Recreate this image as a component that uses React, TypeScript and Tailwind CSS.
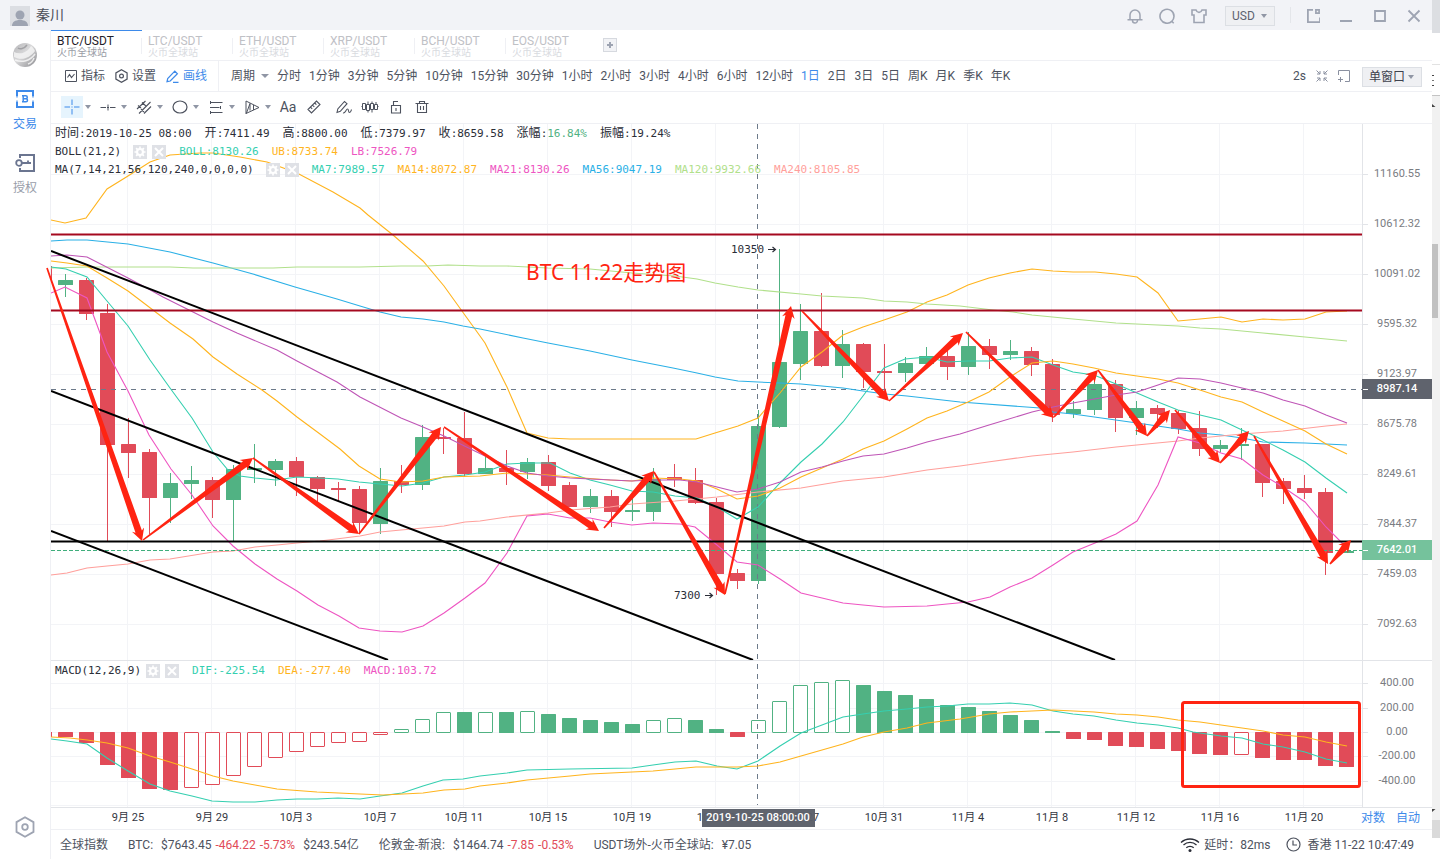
import React from "react";

const GREEN = "#51b283";
const RED = "#e14b58";

/* ------------------------------------------------------------------ */
/* Data                                                               */
/* ------------------------------------------------------------------ */

// [direction, high, body top, body bottom, low]
type Candle = ["g" | "r", number, number, number, number];
const candles: Candle[] = [
  ["g", 274, 280, 285, 297],
  ["r", 278, 280, 314, 320],
  ["r", 304, 313, 445, 542],
  ["r", 418, 444, 453, 478],
  ["r", 449, 452, 498, 534],
  ["g", 473, 483, 498, 523],
  ["g", 466, 480, 484, 499],
  ["r", 477, 480, 500, 518],
  ["g", 465, 469, 500, 541],
  ["g", 444, 468, 470, 483],
  ["g", 459, 461, 470, 486],
  ["r", 457, 461, 477, 496],
  ["r", 476, 477, 489, 502],
  ["r", 482, 488, 490, 502],
  ["r", 486, 489, 523, 534],
  ["g", 468, 481, 524, 534],
  ["r", 465, 481, 485, 493],
  ["g", 425, 437, 485, 490],
  ["r", 428, 437, 439, 454],
  ["r", 412, 438, 474, 477],
  ["g", 457, 468, 474, 474],
  ["r", 450, 468, 472, 485],
  ["g", 458, 462, 472, 479],
  ["r", 455, 462, 486, 491],
  ["r", 482, 485, 507, 507],
  ["g", 489, 496, 507, 513],
  ["r", 490, 496, 512, 527],
  ["g", 498, 510, 512, 521],
  ["g", 468, 479, 512, 521],
  ["r", 464, 477, 480, 487],
  ["r", 468, 480, 503, 504],
  ["r", 498, 502, 574, 595],
  ["r", 569, 573, 581, 589],
  ["g", 410, 426, 581, 584],
  ["g", 249, 362, 427, 428],
  ["g", 304, 331, 364, 380],
  ["r", 293, 331, 366, 367],
  ["g", 330, 344, 366, 378],
  ["r", 343, 344, 372, 388],
  ["r", 344, 371, 373, 395],
  ["g", 357, 363, 373, 382],
  ["g", 347, 356, 364, 364],
  ["r", 348, 356, 367, 380],
  ["g", 332, 346, 367, 375],
  ["r", 339, 346, 355, 369],
  ["g", 340, 351, 355, 360],
  ["r", 347, 351, 365, 376],
  ["r", 359, 364, 415, 422],
  ["g", 401, 409, 414, 418],
  ["g", 372, 384, 410, 415],
  ["r", 380, 384, 418, 432],
  ["g", 401, 408, 418, 435],
  ["r", 405, 408, 414, 428],
  ["r", 410, 413, 429, 434],
  ["r", 411, 428, 449, 456],
  ["g", 440, 445, 449, 452],
  ["g", 428, 444, 446, 460],
  ["r", 444, 444, 483, 497],
  ["r", 478, 481, 489, 504],
  ["r", 475, 488, 493, 499],
  ["r", 488, 492, 553, 575],
  ["g", 551, 551, 553, 553],
];

// [direction, bar end, hollow]
type Bar = ["g" | "r", number, 0 | 1];
const bars: Bar[] = [
  ["r", 737, 0], ["r", 743, 0], ["r", 765, 0], ["r", 778, 0], ["r", 789, 0], ["r", 790, 0],
  ["r", 788, 1], ["r", 785, 1], ["r", 776, 1], ["r", 767, 1], ["r", 758, 1], ["r", 752, 1],
  ["r", 747, 1], ["r", 743, 1], ["r", 742, 1], ["r", 735, 1], ["g", 729, 1], ["g", 719, 1],
  ["g", 712, 1], ["g", 712, 0], ["g", 712, 1], ["g", 712, 0], ["g", 711, 1], ["g", 714, 0],
  ["g", 718, 0], ["g", 720, 0], ["g", 722, 0], ["g", 724, 0], ["g", 720, 1], ["g", 718, 1],
  ["g", 720, 0], ["g", 729, 0], ["r", 737, 0], ["g", 720, 1], ["g", 701, 1], ["g", 685, 1],
  ["g", 682, 1], ["g", 680, 1], ["g", 685, 0], ["g", 691, 0], ["g", 695, 0], ["g", 699, 0],
  ["g", 705, 0], ["g", 707, 0], ["g", 711, 0], ["g", 715, 0], ["g", 720, 0], ["g", 731, 0],
  ["r", 739, 0], ["r", 740, 0], ["r", 746, 0], ["r", 747, 0], ["r", 749, 0], ["r", 751, 0],
  ["r", 754, 0], ["r", 755, 0], ["r", 755, 1], ["r", 758, 0], ["r", 760, 0], ["r", 760, 0],
  ["r", 766, 0], ["r", 767, 0],
];

const priceLines = [
  {
    color: "#ffb41e",
    points:
      "51,220 65,223 86,218 107,189 128,176 150,162 170,155 200,153 213,153 240,157 267,162 297,173 333,192 360,208 368,215 393,235 423,261 444,286 467,318 480,336 485,343 507,387 527,433 548,438 570,439 590,439 613,439 675,439 696,439 715,433 738,426 758,418 780,393 801,367 822,352 843,335 863,327 884,320 907,312 927,302 947,295 968,285 989,278 1010,273 1032,269 1053,271 1073,272 1095,272 1116,274 1137,277 1158,293 1178,321 1200,319 1221,317 1242,322 1263,319 1283,320 1305,319 1326,312 1347,311",
  },
  {
    color: "#2bb0e6",
    points:
      "51,241 67,240 87,240 128,244 170,252 213,263 253,274 295,287 337,299 360,306 380,312 401,317 423,319 444,322 463,326 480,329 523,338 548,343 590,351 632,360 673,368 697,373 715,377 738,381 758,382 780,383 801,384 822,386 843,388 863,391 885,394 907,396 960,402 1040,408 1053,412 1073,414 1137,423 1178,429 1200,433 1221,435 1242,438 1263,442 1305,443 1347,445",
  },
  {
    color: "#b1e08b",
    points:
      "51,268 87,267 128,267 170,267 193,268 273,268 297,267 360,267 401,266 427,266 448,265 480,266 507,266 548,268 590,269 632,273 675,276 697,279 715,283 738,287 758,290 801,294 822,296 863,298 884,301 907,302 927,304 960,306 993,310 1013,312 1032,315 1073,319 1116,323 1178,326 1200,328 1221,329 1263,333 1305,337 1347,341",
  },
  {
    color: "#ff9f9b",
    points:
      "51,575 67,573 87,568 107,566 128,564 150,560 170,559 213,552 233,551 255,547 277,545 297,543 320,541 360,536 380,532 401,530 423,528 444,526 465,522 480,521 507,517 548,513 570,510 610,507 632,504 675,501 717,497 758,492 801,488 843,481 884,477 927,470 960,466 988,462 1032,456 1073,452 1116,447 1178,441 1200,438 1242,434 1283,431 1326,426 1347,424",
  },
  {
    color: "#35cfb0",
    points:
      "51,267 66,269 87,277 107,301 128,326 150,360 170,388 192,418 213,452 228,470 240,476 255,478 276,480 297,477 320,478 338,479 359,482 380,484 402,486 423,483 444,477 465,475 485,472 507,464 527,463 550,463 570,473 590,480 610,485 632,491 653,492 675,496 697,498 717,507 737,519 758,507 780,483 801,462 822,444 843,422 863,396 884,368 905,359 927,357 947,362 968,361 989,361 1010,358 1032,357 1053,365 1073,372 1094,375 1116,384 1137,393 1158,402 1178,410 1200,415 1221,420 1242,430 1263,440 1283,450 1305,462 1326,478 1347,493",
  },
  {
    color: "#ffb41e",
    points:
      "51,261 67,263 87,266 107,278 128,291 170,323 193,339 213,357 237,374 262,390 277,401 297,417 320,434 340,449 359,466 380,479 401,482 423,481 444,477 480,476 507,473 548,475 570,477 610,480 632,481 653,478 680,479 697,481 717,489 737,499 758,496 780,488 801,477 822,468 843,459 863,449 884,441 907,429 927,418 947,411 968,402 989,392 1010,377 1032,363 1053,361 1073,364 1094,368 1116,373 1137,376 1158,379 1178,383 1200,390 1221,397 1242,402 1263,412 1283,421 1305,431 1326,444 1347,454",
  },
  {
    color: "#bf55b6",
    points:
      "51,256 67,255 87,257 128,278 143,286 163,297 213,322 237,333 277,350 297,361 337,382 360,397 401,418 423,427 444,436 485,456 507,466 527,473 548,476 570,478 632,481 653,480 680,480 697,482 717,487 737,492 758,489 780,482 801,472 822,467 843,461 863,456 884,454 907,448 927,442 960,434 989,425 1032,412 1053,407 1073,403 1116,395 1137,392 1158,385 1178,378 1200,379 1221,383 1242,388 1263,393 1283,400 1305,406 1326,415 1347,423",
  },
  {
    color: "#ee55c2",
    points:
      "51,293 65,287 87,298 107,352 128,391 149,435 171,469 192,495 213,526 233,546 255,564 277,579 297,591 318,605 339,616 359,628 380,631 402,632 423,626 444,613 465,598 485,583 507,553 527,516 548,514 570,518 590,518 610,522 632,525 653,523 680,524 695,527 717,545 737,562 758,565 780,579 801,593 822,598 843,603 863,605 884,607 927,606 947,604 968,602 990,597 1010,587 1032,578 1053,565 1073,552 1095,543 1116,534 1137,521 1158,485 1178,437 1200,443 1221,453 1242,459 1263,475 1283,487 1305,502 1326,527 1347,548",
  },
];

const difPoints =
  "51,739 67,741 87,744 107,758 128,771 150,784 170,791 192,796 212,801 233,802 255,802 277,800 297,799 317,799 338,798 360,799 380,796 402,793 423,786 443,780 463,779 480,776 507,773 527,770 570,769 632,768 653,765 675,762 696,761 717,766 737,769 758,761 780,746 801,733 822,725 843,717 863,714 884,711 907,709 927,707 947,706 968,704 989,704 1010,703 1032,705 1053,711 1073,714 1094,716 1116,720 1137,723 1158,725 1178,728 1193,732 1221,736 1242,738 1263,744 1283,747 1305,752 1326,759 1347,763";
const deaPoints =
  "51,737 70,738 87,740 107,743 128,748 150,756 170,762 192,769 213,776 233,781 255,785 277,789 317,792 360,794 383,795 423,793 444,790 465,789 480,786 507,783 527,780 570,776 590,774 632,772 653,771 675,769 696,767 737,767 758,766 780,762 801,756 822,750 843,744 863,737 884,732 907,728 927,723 960,719 989,714 1010,712 1053,710 1094,712 1116,714 1137,715 1158,717 1178,720 1200,722 1221,725 1242,728 1263,731 1283,735 1305,737 1326,742 1347,746";

// [tail x, tail y, tip x, tip y]
const arrows = [
  [47, 268, 142, 541],
  [143, 540, 253, 458],
  [253, 458, 359, 534],
  [359, 534, 441, 427],
  [444, 427, 599, 531],
  [604, 528, 654, 471],
  [654, 472, 725, 595],
  [725, 594, 791, 306],
  [802, 311, 889, 401],
  [889, 401, 963, 333],
  [966, 332, 1054, 418],
  [1054, 417, 1098, 370],
  [1098, 370, 1147, 436],
  [1147, 436, 1170, 410],
  [1175, 410, 1220, 463],
  [1220, 463, 1249, 431],
  [1254, 436, 1328, 564],
  [1330, 564, 1351, 540],
];

function arrowPoints([x1, y1, x2, y2]: number[]) {
  const len = Math.hypot(x2 - x1, y2 - y1);
  const ux = (x2 - x1) / len;
  const uy = (y2 - y1) / len;
  const at = (back: number, side: number) =>
    `${(x2 - ux * back - uy * side).toFixed(1)},${(y2 - uy * back + ux * side).toFixed(1)}`;
  return [at(len, 0.8), at(10, 3.4), at(12, 6.4), at(0, 0), at(12, -6.4), at(10, -3.4), at(len, -0.8)].join(" ");
}

const priceTicks = ["11160.55", "10612.32", "10091.02", "9595.32", "9123.97", "8675.78", "8249.61", "7844.37", "7459.03", "7092.63"];
const macdTicks: [string, number][] = [["400.00", 683], ["200.00", 708], ["0.00", 732], ["-200.00", 756], ["-400.00", 781]];
const dateTicks = ["9月 25", "9月 29", "10月 3", "10月 7", "10月 11", "10月 15", "10月 19", "10月 23", "10月 27", "10月 31", "11月 4", "11月 8", "11月 12", "11月 16", "11月 20"];
const markets = ["BTC/USDT", "LTC/USDT", "ETH/USDT", "XRP/USDT", "BCH/USDT", "EOS/USDT"];
const periods = ["分时", "1分钟", "3分钟", "5分钟", "10分钟", "15分钟", "30分钟", "1小时", "2小时", "3小时", "4小时", "6小时", "12小时", "1日", "2日", "3日", "5日", "周K", "月K", "季K", "年K"];

const gridX = (i: number) => 127.5 + 84 * i;
const barX = (i: number) => 58 + 21 * i;

/* ------------------------------------------------------------------ */
/* Small parts                                                        */
/* ------------------------------------------------------------------ */

type IconProps = { children: React.ReactNode; w?: number; h?: number; className?: string };
function Icon({ children, w = 16, h = 16, className = "" }: IconProps) {
  return (
    <svg width={w} height={h} viewBox={`0 0 ${w} ${h}`} fill="none" stroke="currentColor" className={`shrink-0 ${className}`} aria-hidden="true">
      {children}
    </svg>
  );
}

function Caret({ small = false }: { small?: boolean }) {
  return small ? (
    <svg width="6" height="4" viewBox="0 0 6 4" className="shrink-0" aria-hidden="true">
      <path d="M0 0h6L3 4z" fill="#9096a5" />
    </svg>
  ) : (
    <svg width="8" height="4" viewBox="0 0 8 4" className="shrink-0" aria-hidden="true">
      <path d="M0 0h8L4 4z" fill="#9096a5" />
    </svg>
  );
}

function BoxSelect({ label, options, className }: { label: string; options: string[]; className: string }) {
  return (
    <label className={`relative flex h-5 items-center border border-[#dcdfe4] bg-[#eff0f3] ${className}`}>
      <select aria-label={label} className="h-full w-full cursor-pointer appearance-none bg-transparent pl-1.5 outline-none">
        {options.map((o) => (
          <option key={o}>{o}</option>
        ))}
      </select>
      <span className="pointer-events-none absolute right-[7px] flex">
        <Caret small />
      </span>
    </label>
  );
}

function LegendButtons({ name }: { name: string }) {
  return (
    <span className="flex gap-[5px]">
      <button aria-label={`${name} 设置`} className="flex size-3.5 items-center justify-center bg-[#dfe1e6]">
        <svg width="12" height="12" viewBox="0 0 12 12" aria-hidden="true">
          <circle cx="6" cy="6" r="3" fill="none" stroke="#fff" strokeWidth="2" />
          <path d="M6 0.5v11M0.5 6h11M2.1 2.1l7.8 7.8M9.9 2.1l-7.8 7.8" stroke="#fff" strokeWidth="1.6" />
          <circle cx="6" cy="6" r="1.9" fill="#dfe1e6" />
        </svg>
      </button>
      <button aria-label={`${name} 关闭`} className="flex size-3.5 items-center justify-center bg-[#dfe1e6]">
        <svg width="10" height="10" viewBox="0 0 10 10" aria-hidden="true">
          <path d="M1 1l8 8M9 1L1 9" stroke="#fff" strokeWidth="2" />
        </svg>
      </button>
    </span>
  );
}

function Quote({ label, value, tone = "text-[#2b2e38]" }: { label: string; value: string; tone?: string }) {
  return (
    <span>
      <span className="text-xs">{label}</span>:<span className={tone}>{value}</span>
    </span>
  );
}

/* ------------------------------------------------------------------ */
/* Chart panels                                                       */
/* ------------------------------------------------------------------ */

function PricePanel() {
  return (
    <svg viewBox="51 124 1381 537" className="block h-auto w-full overflow-visible" role="img" aria-label="BTC/USDT 日K线">
      <defs>
        <clipPath id="plot">
          <rect x="51" y="124" width="1311" height="536" />
        </clipPath>
      </defs>
      <g stroke="#f3f4f7">
        {dateTicks.map((d, i) => (
          <line key={d} x1={gridX(i)} x2={gridX(i)} y1="124" y2="661" />
        ))}
        {priceTicks.map((p, i) => (
          <line key={p} x1="51" x2="1362" y1={174.5 + 50 * i} y2={174.5 + 50 * i} />
        ))}
      </g>
      <g stroke="#e2e4e8">
        <line x1="1362.5" x2="1362.5" y1="124" y2="661" />
        {priceTicks.map((p, i) => (
          <line key={p} x1="1363" x2="1368" y1={174.5 + 50 * i} y2={174.5 + 50 * i} />
        ))}
        <line x1="51" x2="1432" y1="660.5" y2="660.5" />
      </g>
      <g clipPath="url(#plot)">
        <rect x="51" y="266" width="1" height="16" fill={RED} />
        {candles.map(([dir, high, top, bottom, low], i) => (
          <g key={i} fill={dir === "g" ? GREEN : RED}>
            <rect x={barX(i) + 7} y={high} width="1" height={low - high} />
            <rect x={barX(i)} y={top} width="15" height={bottom - top} rx="0.5" />
          </g>
        ))}
        <line x1="757.5" x2="757.5" y1="124" y2="661" stroke="#6d7a8a" strokeDasharray="5 5" />
        <line x1="51" x2="1362" y1="389.5" y2="389.5" stroke="#6d7a8a" strokeDasharray="5 5" />
        <g fill="none">
          {priceLines.map((l, i) => (
            <polyline key={i} points={l.points} stroke={l.color} strokeWidth="1.1" />
          ))}
        </g>
        <line x1="51" x2="1362" y1="550.5" y2="550.5" stroke="#3fae7c" strokeDasharray="4 2" />
        <g stroke="#a5091f" strokeWidth="2">
          <line x1="51" x2="1362" y1="234.5" y2="234.5" />
          <line x1="51" x2="1362" y1="310.5" y2="310.5" />
        </g>
        <g stroke="#000" strokeWidth="2">
          <line x1="51" x2="1362" y1="541.5" y2="541.5" />
          <line x1="51" x2="1115" y1="251" y2="660" />
          <line x1="51" x2="753" y1="391" y2="660" />
          <line x1="51" x2="388" y1="531" y2="660" />
        </g>
      </g>
      <g fill="#2b2e38" fontSize="11" className="font-['DejaVu_Sans_Mono',monospace]">
        <text x="731" y="253">10350</text>
        <text x="674" y="599">7300</text>
      </g>
      <g stroke="#2b2e38" fill="none" strokeWidth="1.2">
        <path d="M768 249.500h7M772.500 247l3 2.500-3 2.500" />
        <path d="M705 595.500h7M709.500 593l3 2.500-3 2.500" />
      </g>
      <g fill="#ff2412">
        {arrows.map((a, i) => (
          <polygon key={i} points={arrowPoints(a)} />
        ))}
        <text x="526" y="280" fontSize="21" className="font-['Noto_Sans','Noto_Sans_CJK_SC',sans-serif]">
          BTC 11.22走势图
        </text>
      </g>
      <g fontSize="11" fill="#7a7c82" textAnchor="middle">
        {priceTicks.map((p, i) => (
          <text key={p} x="1397" y={177 + 50 * i}>
            {p}
          </text>
        ))}
      </g>
      <g fontSize="11" fill="#fff" textAnchor="middle" className="font-medium">
        <rect x="1362" y="379" width="70" height="20" fill="#5f636d" />
        <text x="1397" y="392">8987.14</text>
        <rect x="1362" y="540" width="70" height="20" fill="#75c29c" />
        <text x="1397" y="553">7642.01</text>
      </g>
      <path d="M1363 389.500h5M1363 550.500h5" stroke="#fff" />
    </svg>
  );
}

function MacdPanel() {
  return (
    <svg viewBox="51 661 1381 168" className="block h-auto w-full" role="img" aria-label="MACD">
      <g stroke="#f3f4f7">
        {dateTicks.map((d, i) => (
          <line key={d} x1={gridX(i)} x2={gridX(i)} y1="661" y2="807" />
        ))}
        {macdTicks.map(([t, y]) => (
          <line key={t} x1="51" x2="1362" y1={y + 0.5} y2={y + 0.5} />
        ))}
        <line x1="51" x2="1362" y1="805.5" y2="805.5" />
      </g>
      <g stroke="#e2e4e8">
        <line x1="1362.5" x2="1362.5" y1="661" y2="807" />
        {macdTicks.map(([t, y]) => (
          <line key={t} x1="1363" x2="1368" y1={y + 0.5} y2={y + 0.5} />
        ))}
        <line x1="51" x2="1432" y1="807.5" y2="807.5" />
      </g>
      <rect x="51" y="732" width="1" height="5" fill={RED} />
      {bars.map(([dir, end, hollow], i) => {
        const color = dir === "g" ? GREEN : RED;
        const top = dir === "g" ? end : 732;
        const bottom = dir === "g" ? 733 : end;
        return hollow ? (
          <rect key={i} x={barX(i) + 0.5} y={top + 0.5} width="14" height={bottom - top - 1} fill="#fff" stroke={color} rx="0.5" />
        ) : (
          <rect key={i} x={barX(i)} y={top} width="15" height={bottom - top} fill={color} rx="0.5" />
        );
      })}
      <line x1="757.5" x2="757.5" y1="664" y2="805" stroke="#6d7a8a" strokeDasharray="5 5" />
      <g fill="none" strokeWidth="1.1">
        <polyline points={difPoints} stroke="#35cfb0" />
        <polyline points={deaPoints} stroke="#ffb41e" />
      </g>
      <rect x="1182.500" y="702.500" width="177" height="84" rx="2" fill="none" stroke="#ff2412" strokeWidth="3" />
      <g fontSize="11" fill="#7a7c82" textAnchor="middle">
        {macdTicks.map(([t, y]) => (
          <text key={t} x="1397" y={y + 3}>
            {t}
          </text>
        ))}
      </g>
      <g fontSize="11" fill="#33363f" textAnchor="middle">
        {dateTicks.map((d, i) => (
          <text key={d} x={128 + 84 * i} y="821">
            {d}
          </text>
        ))}
      </g>
      <rect x="702" y="809" width="113" height="18" fill="#5b5f69" fillOpacity="0.97" />
      <text x="758" y="821" fontSize="11" fill="#fff" textAnchor="middle" className="font-medium">
        2019-10-25 08:00:00
      </text>
    </svg>
  );
}

/* ------------------------------------------------------------------ */
/* Page regions                                                       */
/* ------------------------------------------------------------------ */

function TitleBar() {
  return (
    <header className="flex h-[30px] items-center bg-[#f2f3f7] pr-2.5 pl-2.5 text-[#9ea4b2]">
      <svg width="20" height="20" viewBox="0 0 20 20" className="mt-0.5" aria-hidden="true">
        <rect width="20" height="20" fill="#dcdee3" />
        <circle cx="10" cy="9" r="4.500" fill="#9ea4b2" />
        <path d="M2 20c0-4 3-6 8-6s8 2 8 6z" fill="#9ea4b2" />
      </svg>
      <span className="ml-1.5 text-sm leading-5 text-[#4a4e59]">秦川</span>
      <div className="ml-auto flex items-center gap-4 pt-0.5">
        <button aria-label="通知">
          <Icon>
            <path d="M3 11.500V7a5 5 0 0 1 10 0v4.500M0.500 11.800h15M5.500 12.500a2.500 2.500 0 0 0 5 0" strokeWidth="1.500" />
          </Icon>
        </button>
        <button aria-label="消息">
          <Icon>
            <path d="M12.800 13.300A7 7 0 1 1 15 8.200c0 2-.8 3.800-2.200 5.100M12.300 12.800l2.400 2.400" strokeWidth="1.600" />
          </Icon>
        </button>
        <button aria-label="皮肤">
          <Icon>
            <path d="M1 2h4c.6 1.600 1.700 2.400 3 2.400S10.400 3.600 11 2h4v5h-2v7.500H3V7H1z" strokeWidth="1.600" />
          </Icon>
        </button>
        <BoxSelect label="货币" options={["USD", "CNY"]} className="ml-0.5 w-[50px] text-xs text-[#5c6270]" />
      </div>
      <div className="ml-[15px] flex h-4 items-center gap-[18px] border-l border-[#e4e6ea] pt-0.5 pl-[13px]">
        <button aria-label="弹出">
          <Icon>
            <path d="M9 1.900H3.900v12.200H16V9.500" strokeWidth="1.800" />
            <path d="M11.900 1.900h3.200v3.200h-3.200z" strokeWidth="1.700" />
          </Icon>
        </button>
        <button aria-label="最小化">
          <Icon>
            <path d="M2 13h12" strokeWidth="2" />
          </Icon>
        </button>
        <button aria-label="最大化">
          <Icon>
            <path d="M3 3h10v10H3z" strokeWidth="1.800" />
          </Icon>
        </button>
        <button aria-label="关闭">
          <Icon>
            <path d="M2.500 2.500l11 11M13.500 2.500l-11 11" strokeWidth="1.800" />
          </Icon>
        </button>
      </div>
    </header>
  );
}

function Sidebar() {
  return (
    <nav className="flex w-[51px] shrink-0 flex-col items-center border-r border-[#eff0f4] pt-3 text-xs leading-4">
      <svg width="26" height="26" viewBox="0 0 26 26" aria-hidden="true">
        <defs>
          <linearGradient id="ball" x1="0" y1="0" x2="1" y2="1">
            <stop offset="0" stopColor="#b5b5b8" />
            <stop offset="0.45" stopColor="#d9d9da" />
            <stop offset="1" stopColor="#8c8c90" />
          </linearGradient>
        </defs>
        <circle cx="13" cy="13" r="12" fill="url(#ball)" />
        <path d="M2 10c6 3 13 1 17-6 2 1 3 3 4 5-5 7-13 10-21 6z" fill="#f3f3f3" opacity="0.85" />
        <path d="M6 6c2 1.500 6 1 9-3" stroke="#8f8f93" strokeWidth="1.500" fill="none" opacity="0.7" />
        <path d="M3 18c7 3 15 1 20-6M16 22c3-1 5-3 6-6" stroke="#fafafa" strokeWidth="1.500" fill="none" opacity="0.8" />
      </svg>
      <a href="#trade" className="mt-[22px] flex flex-col items-center gap-2 text-[#3d8aea]">
        <Icon w={18} h={18}>
          <path d="M1 6V1h16v5M1 12v5h16v-5" strokeWidth="2" />
          <path d="M1 6v1.500M17 6v1.500M1 10.500V12M17 10.500V12" strokeWidth="2" opacity="0.6" />
          <path d="M7.200 5.800v6M6 5.800h3.800a1.500 1.500 0 0 1 0 3H7.500M7.500 8.800H10a1.500 1.500 0 0 1 0 3H6" strokeWidth="1.500" />
        </Icon>
        <span>交易</span>
      </a>
      <a href="#auth" className="mt-[22px] flex flex-col items-center gap-2 text-[#989da9]">
        <Icon w={20} h={18} className="text-[#6b7590]">
          <path d="M5 4V1h14v16H5v-3" strokeWidth="2" />
          <circle cx="4" cy="9" r="2.800" strokeWidth="1.800" />
          <path d="M7 9h9M13 9V6.500" strokeWidth="1.800" />
        </Icon>
        <span>授权</span>
      </a>
      <button aria-label="系统设置" className="mt-auto mb-[21px] text-[#9ea4b2]">
        <Icon w={20} h={22}>
          <path d="M10 1.200l8.500 4.900v9.800L10 20.800l-8.500-4.900V6.100z" strokeWidth="1.800" />
          <circle cx="10" cy="11" r="2.800" strokeWidth="1.800" />
        </Icon>
      </button>
    </nav>
  );
}

function MarketTabs() {
  return (
    <div role="tablist" className="flex h-[31px] items-center border-b border-[#eff0f4]">
      {markets.map((m, i) => (
        <button
          key={m}
          role="tab"
          aria-selected={i === 0}
          className={`flex h-full w-[91px] items-center border-t text-left ${i === 0 ? "border-[#3d8aea]" : "border-transparent"}`}
        >
          <span className={`flex h-4 flex-1 flex-col justify-center border-r pt-0.5 pl-1.5 ${i < 5 ? "border-[#eff0f4]" : "border-transparent"}`}>
            <span className={`text-xs leading-[11px] ${i === 0 ? "text-[#1f2029]" : "text-[#bfc1c6]"}`}>{m}</span>
            <span className={`text-[10px] leading-[11px] ${i === 0 ? "text-[#9a9da6]" : "text-[#d9dbdf]"}`}>火币全球站</span>
          </span>
        </button>
      ))}
      <button aria-label="添加" className="ml-1.5 flex size-3.5 items-center justify-center border border-[#d6d9df] bg-[#f2f3f6] text-[#9ea4b2]">
        <Icon w={6} h={6}>
          <path d="M3 0v6M0 3h6" strokeWidth="2" />
        </Icon>
      </button>
    </div>
  );
}

function PeriodBar() {
  return (
    <div className="flex h-[31px] items-center border-b border-[#eff0f4] whitespace-nowrap">
      <div className="flex h-full items-center gap-2.5 border-r border-[#eff0f4] pr-[11px] pl-3.5">
        <button className="flex items-center gap-1">
          <Icon w={12} h={12}>
            <path d="M0.500 0.500h11v11H0.500z" />
            <path d="M2.500 7.500l2-3 2 3 3-3.500" strokeWidth="1.100" />
          </Icon>
          指标
        </button>
        <button className="flex items-center gap-1">
          <Icon w={13} h={14}>
            <path d="M6.500 0.700l5.600 3.200v6.200l-5.600 3.200L0.900 10.100V3.900z" strokeWidth="1.200" />
            <circle cx="6.500" cy="7" r="1.900" strokeWidth="1.200" />
          </Icon>
          设置
        </button>
        <button className="flex items-center gap-1 text-[#3d8aea]">
          <Icon w={13} h={13}>
            <path d="M1 11.700l.7-3.200L8.800 1.200l2.600 2.500-7.200 7.300zM7 12.300h5.500" strokeWidth="1.200" />
          </Icon>
          画线
        </button>
      </div>
      <label className="relative ml-3 flex items-center">
        <select aria-label="周期" className="w-[38px] cursor-pointer appearance-none bg-transparent outline-none">
          <option>周期</option>
        </select>
        <span className="pointer-events-none absolute right-0 flex">
          <Caret />
        </span>
      </label>
      <div className="ml-2 flex gap-2">
        {periods.map((p) => (
          <button key={p} className={p === "1日" ? "text-[#3d8aea]" : ""}>
            {p}
          </button>
        ))}
      </div>
      <div className="ml-auto flex items-center gap-2.5 pr-2.5 text-[#8a90a0]">
        <span className="text-[#4d525e]">2s</span>
        <button aria-label="缩小">
          <Icon w={12} h={12}>
            <path d="M0.500 0.500L4 4M1 4h3V1M11.500 0.500L8 4M11 4H8V1M0.500 11.500L4 8M1 8h3v3M11.500 11.500L8 8M11 8H8v3" />
          </Icon>
        </button>
        <button aria-label="新窗口">
          <Icon w={12} h={12}>
            <path d="M0.500 5V0.500h11v11H7M0 9.500h5M2.500 7v5" />
          </Icon>
        </button>
        <BoxSelect label="窗口" options={["单窗口", "双窗口"]} className="mt-0.5 ml-0.5 w-[60px] text-[#3e424d]" />
      </div>
    </div>
  );
}

const drawTools: { name: string; icon: React.ReactNode }[] = [
  { name: "十字光标", icon: <path d="M8 0.500v5.500M8 10v5.500M0.500 8H6M10 8h5.500M7.500 8h1" /> },
  { name: "水平线", icon: <path d="M0.500 8.500h5.500M10 8.500h5.500M7 8.500h2M8 5.500v6" /> },
  {
    name: "平行线",
    icon: <path d="M1 10L9.500 2M3 14.500L14.500 3M8 14.500L15 7.500M2 6.500l3 2.500M6 3.500l4.500 4M5 10l3 3" strokeWidth="1.100" />,
  },
  { name: "椭圆", icon: <ellipse cx="8" cy="8" rx="7" ry="6" strokeWidth="1.200" /> },
  { name: "斐波那契", icon: <path d="M2 3.500h12.500M2 8.500h9.500M2 13.500h12.500M2.500 2v3M12.500 7v3M2.500 12v3" /> },
  { name: "江恩", icon: <path d="M2 2v13M2 2l13 6.500M2 14.500l13-6M2.500 14L6 4.500v7M9.500 6v5" /> },
];

function DrawBar() {
  return (
    <div className="flex h-8 items-center border-b border-[#eff0f4] pb-px pl-2.5">
      {drawTools.map((t, i) => (
        <div key={t.name} className="flex w-9 items-center gap-0.5">
          <button
            aria-label={t.name}
            className={`flex size-[22px] items-center justify-center ${i === 0 ? "bg-[#e6f4fd] text-[#3d8aea]" : ""}`}
          >
            <Icon>{t.icon}</Icon>
          </button>
          <Caret small />
        </div>
      ))}
      <div className="flex items-center gap-1">
        <button className="w-[22px] text-center text-sm leading-5">Aa</button>
        <button aria-label="测量" className="flex size-[22px] items-center justify-center">
          <Icon>
            <path d="M2 10.500L10.500 2l3.500 3.500-8.500 8.500zM4.500 8.200l1.700 1.700M6.600 6.100l1.700 1.700M8.700 4l1.700 1.700" strokeWidth="1.100" />
          </Icon>
        </button>
      </div>
      <div className="ml-2 flex items-center gap-1">
        <button aria-label="画笔" className="flex size-[22px] items-center justify-center">
          <Icon w={18}>
            <path d="M2 13.500l.8-3.500 6.700-7.500 2.500 2.200-6.700 7.600zM8 14c2.500.5 3-4 4.500-4s.5 3.500 2 3.500 1.500-1.500 2-3" strokeWidth="1.100" />
          </Icon>
        </button>
        <button aria-label="K线" className="flex size-[22px] items-center justify-center">
          <Icon w={18}>
            <path d="M0.500 7.500h1M16 7.500h1.500" />
            <path d="M1.500 4.500h3v6h-3zM5.500 5.500h3v6h-3zM9.500 4.500h3v6h-3zM13.500 5.500h3v5h-3zM7 2.500v3M7 11.500v2M11 2.500v2M11 10.500v3M15 3v2.500" />
          </Icon>
        </button>
        <button aria-label="锁定" className="flex size-[22px] items-center justify-center">
          <Icon>
            <path d="M3.500 6.500h9v7.500h-9zM5.500 6.500V2.500h4.500M8 9v3" strokeWidth="1.100" />
          </Icon>
        </button>
        <button aria-label="删除" className="flex size-[22px] items-center justify-center">
          <Icon>
            <path d="M1.500 4.500h13M3.500 4.500V13.500h9V4.500M5.500 4.500V2.500h5v2M6.500 7v4M9.500 7v4" strokeWidth="1.100" />
          </Icon>
        </button>
      </div>
    </div>
  );
}

const legendClass =
  "absolute top-px left-1 flex flex-col font-['DejaVu_Sans_Mono','Noto_Sans_CJK_SC',monospace] text-[11px] leading-[18px] whitespace-nowrap text-[#2b2e38]";

function StatusBar() {
  return (
    <footer className="flex h-[30px] items-center border-t border-[#eff0f4] pr-[18px] pl-[9px] whitespace-nowrap">
      <span>全球指数</span>
      <span className="ml-5">BTC:</span>
      <span className="ml-2">$7643.45</span>
      <span className="ml-1 text-[#e14b58]">-464.22</span>
      <span className="ml-1 text-[#e14b58]">-5.73%</span>
      <span className="ml-2">$243.54亿</span>
      <span className="ml-5">伦敦金-新浪:</span>
      <span className="ml-2">$1464.74</span>
      <span className="ml-1 text-[#e14b58]">-7.85</span>
      <span className="ml-1 text-[#e14b58]">-0.53%</span>
      <span className="ml-5">USDT场外-火币全球站:</span>
      <span className="ml-2">¥7.05</span>
      <span className="ml-auto flex items-center gap-1">
        <Icon w={20} h={16} className="text-[#2b2e38]">
          <path d="M1 5.500C6 0.800 14 0.800 19 5.500M3.500 8c3.700-3.500 9.300-3.500 13 0M6.300 10.800c2-2 5.400-2 7.400 0" strokeWidth="1.300" />
          <circle cx="10" cy="13.500" r="1.500" fill="currentColor" stroke="none" />
        </Icon>
        延时：82ms
      </span>
      <span className="ml-4 flex items-center gap-1.5">
        <Icon w={15} h={15}>
          <circle cx="7.500" cy="7.500" r="6.500" strokeWidth="1.200" />
          <path d="M7 3.500V8h4" strokeWidth="1.200" />
        </Icon>
        香港 11-22 10:47:49
      </span>
    </footer>
  );
}

function EdgeStrip() {
  return (
    <div className="flex w-2 shrink-0 flex-col bg-white" aria-hidden="true">
      <div className="h-[33px] bg-[#dcdee2]" />
      <div className="h-8 border-b border-[#e2e2e2]" />
      <div className="h-[31px] border-b border-[#c4c4c4] pt-2.5">
        <div className="h-px w-0.5 bg-[#444]" />
        <div className="mt-1 h-px w-0.5 bg-[#777]" />
        <div className="mt-1 h-px w-0.5 bg-[#444]" />
      </div>
      <div className="flex flex-1 flex-col bg-[#f1f1f1] pt-2">
        <svg width="4" height="3" viewBox="0 0 4 3">
          <path d="M0 0l3.500 3H0z" fill="#444" />
        </svg>
        <div className="mt-[137px] h-[74px] w-1.5 bg-[#c1c1c1]" />
        <svg width="4" height="3" viewBox="0 0 4 3" className="mt-auto mb-2">
          <path d="M0 3V0h3.500z" fill="#444" />
        </svg>
      </div>
      <div className="h-[18px] bg-[#dadada]" />
      <div className="h-[21px]" />
    </div>
  );
}

export default function App() {
  return (
    <div className="flex min-h-screen bg-white font-['Roboto','Noto_Sans_CJK_SC',sans-serif] text-xs text-[#4d525e]">
      <div className="flex min-w-0 flex-1 flex-col">
        <TitleBar />
        <div className="flex flex-1">
          <Sidebar />
          <div className="flex min-w-0 flex-1 flex-col">
            <MarketTabs />
            <PeriodBar />
            <DrawBar />
            <main>
              <section className="relative">
                <PricePanel />
                <div className={legendClass}>
                  <div className="flex gap-[13px]">
                    <Quote label="时间" value="2019-10-25 08:00" />
                    <Quote label="开" value="7411.49" />
                    <Quote label="高" value="8800.00" />
                    <Quote label="低" value="7379.97" />
                    <Quote label="收" value="8659.58" />
                    <Quote label="涨幅" value="16.84%" tone="text-[#51b283]" />
                    <Quote label="振幅" value="19.24%" />
                  </div>
                  <div className="flex items-center gap-[13px]">
                    <span className="flex items-center gap-3">
                      BOLL(21,2)
                      <LegendButtons name="BOLL" />
                    </span>
                    <span className="text-[#35cfb0]">BOLL:8130.26</span>
                    <span className="text-[#ffb41e]">UB:8733.74</span>
                    <span className="text-[#ee55c2]">LB:7526.79</span>
                  </div>
                  <div className="flex items-center gap-[13px]">
                    <span className="flex items-center gap-3">
                      MA(7,14,21,56,120,240,0,0,0,0)
                      <LegendButtons name="MA" />
                    </span>
                    <span className="text-[#35cfb0]">MA7:7989.57</span>
                    <span className="text-[#ffb41e]">MA14:8072.87</span>
                    <span className="text-[#ee55c2]">MA21:8130.26</span>
                    <span className="text-[#2bb0e6]">MA56:9047.19</span>
                    <span className="text-[#b1e08b]">MA120:9932.66</span>
                    <span className="text-[#ff9f9b]">MA240:8105.85</span>
                  </div>
                </div>
              </section>
              <section className="relative">
                <MacdPanel />
                <div className={legendClass}>
                  <div className="flex items-center gap-[13px]">
                    <span className="flex items-center gap-[5px]">
                      MACD(12,26,9)
                      <LegendButtons name="MACD" />
                    </span>
                    <span className="text-[#35cfb0]">DIF:-225.54</span>
                    <span className="text-[#ffb41e]">DEA:-277.40</span>
                    <span className="text-[#ee55c2]">MACD:103.72</span>
                  </div>
                </div>
                <div className="absolute right-3 bottom-0.5 flex gap-[11px] leading-[18px] text-[#3d8aea]">
                  <button>对数</button>
                  <button>自动</button>
                </div>
              </section>
            </main>
            <StatusBar />
          </div>
        </div>
      </div>
      <EdgeStrip />
    </div>
  );
}
